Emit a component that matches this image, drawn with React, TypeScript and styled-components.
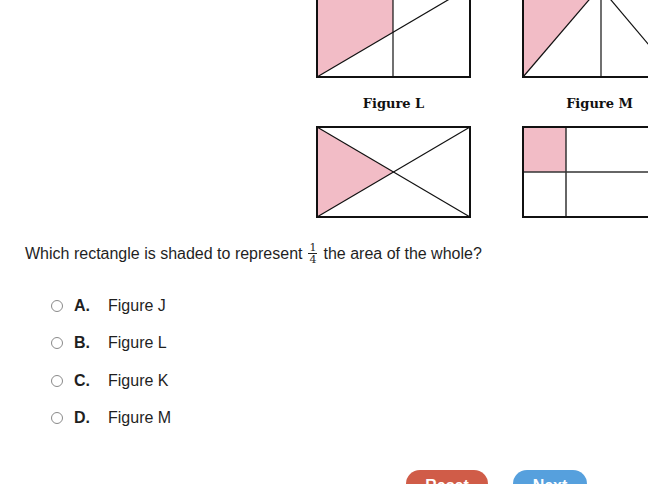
import React from "react";
import styled, { createGlobalStyle } from "styled-components";

const GlobalStyle = createGlobalStyle`
  html, body { margin: 0; padding: 0; background: #fff; overflow: hidden; }
  body { font-family: "Liberation Sans", Arial, sans-serif; color: #1f1f1f; }
`;

const Page = styled.div`
  margin-top: -46px;
  padding-left: 25px;
`;

const Figures = styled.div`
  display: grid;
  grid-template-columns: 155px 155px;
  column-gap: 51px;
  row-gap: 16px;
  margin-left: 291px;
`;

const FigureCell = styled.div`
  display: flex;
  flex-direction: column;
  align-items: center;
`;

const FigureLabel = styled.div`
  font-family: "DejaVu Serif", serif;
  font-weight: bold;
  font-size: 13px;
  line-height: 20px;
  height: 20px;
  margin-bottom: 12px;
  color: #111;
`;

const FigureSvg = styled.svg`
  display: block;
  overflow: visible;
`;

const Question = styled.p`
  margin: 25px 0 0;
  font-size: 16px;
  line-height: 20px;
  display: flex;
  align-items: center;
  gap: 5px;
`;

const Fraction = styled.span`
  display: inline-flex;
  flex-direction: column;
  align-items: center;
  font-family: "DejaVu Serif", serif;
  font-size: 11px;
  line-height: 9px;
  margin: 0 1px;
`;

const FracTop = styled.span`
  border-bottom: 1px solid #222;
  padding: 0 1px 1px;
`;

const FracBottom = styled.span`
  padding-top: 1px;
`;

const Options = styled.ul`
  list-style: none;
  margin: 32px 0 0;
  padding: 0 0 0 26px;
  display: flex;
  flex-direction: column;
  gap: 17.4px;
`;

const Option = styled.li`
  display: flex;
  align-items: center;
  height: 20px;
  font-size: 16px;
`;

const Radio = styled.span`
  width: 12px;
  height: 12px;
  border: 1px solid #8a8a8a;
  border-radius: 50%;
  box-sizing: border-box;
  margin-right: 11px;
`;

const Letter = styled.span`
  font-weight: bold;
  width: 34px;
`;

const Buttons = styled.div`
  display: flex;
  gap: 25px;
  margin-top: 42px;
  padding-left: 381px;
`;

const Button = styled.button<{ $color: string; $w: number }>`
  width: ${(p) => p.$w}px;
  height: 32px;
  border: none;
  border-radius: 14px;
  background: ${(p) => p.$color};
  color: #fff;
  font-family: "Liberation Sans", Arial, sans-serif;
  font-weight: bold;
  font-size: 16px;
`;

const W = 155;
const H = 92;

const Frame = () => <rect x={1} y={1} width={W - 2} height={H - 2} fill="none" stroke="#111" strokeWidth={2} />;

const FigJ = () => (
  <FigureSvg width={W} height={H} viewBox={`0 0 ${W} ${H}`}>
    <polygon points={`1,1 77,1 77,${H / 2} 1,${H - 1}`} fill="#f2bcc6" />
    <line x1={77} y1={1} x2={77} y2={H - 1} stroke="#111" strokeWidth={1.2} />
    <line x1={1} y1={H - 1} x2={W - 1} y2={1} stroke="#111" strokeWidth={1.2} />
    <Frame />
  </FigureSvg>
);

const FigK = () => (
  <FigureSvg width={W} height={H} viewBox={`0 0 ${W} ${H}`}>
    <polygon points={`1,1 78,1 1,${H - 1}`} fill="#f2bcc6" />
    <line x1={79} y1={1} x2={79} y2={H - 1} stroke="#111" strokeWidth={1.2} />
    <line x1={1} y1={H - 1} x2={78} y2={1} stroke="#111" strokeWidth={1.2} />
    <line x1={78} y1={1} x2={W - 1} y2={H - 1} stroke="#111" strokeWidth={1.2} />
    <Frame />
  </FigureSvg>
);

const FigL = () => (
  <FigureSvg width={W} height={H} viewBox={`0 0 ${W} ${H}`}>
    <polygon points={`1,1 ${W / 2},${H / 2} 1,${H - 1}`} fill="#f2bcc6" />
    <line x1={1} y1={1} x2={W - 1} y2={H - 1} stroke="#111" strokeWidth={1.2} />
    <line x1={1} y1={H - 1} x2={W - 1} y2={1} stroke="#111" strokeWidth={1.2} />
    <Frame />
  </FigureSvg>
);

const FigM = () => (
  <FigureSvg width={W} height={H} viewBox={`0 0 ${W} ${H}`}>
    <rect x={1} y={1} width={43} height={45} fill="#f2bcc6" />
    <line x1={44} y1={1} x2={44} y2={H - 1} stroke="#333" strokeWidth={1.5} />
    <line x1={1} y1={46} x2={W - 1} y2={46} stroke="#333" strokeWidth={1.5} />
    <Frame />
  </FigureSvg>
);

const figures = [
  { label: "Figure J", Fig: FigJ },
  { label: "Figure K", Fig: FigK },
  { label: "Figure L", Fig: FigL },
  { label: "Figure M", Fig: FigM },
];

const options = [
  { l: "A.", t: "Figure J" },
  { l: "B.", t: "Figure L" },
  { l: "C.", t: "Figure K" },
  { l: "D.", t: "Figure M" },
];

export default function App() {
  return (
    <>
      <GlobalStyle />
      <Page>
        <Figures>
          {figures.map(({ label, Fig }) => (
            <FigureCell key={label}>
              <FigureLabel>{label}</FigureLabel>
              <Fig />
            </FigureCell>
          ))}
        </Figures>
        <Question>
          Which rectangle is shaded to represent
          <Fraction>
            <FracTop>1</FracTop>
            <FracBottom>4</FracBottom>
          </Fraction>
          the area of the whole?
        </Question>
        <Options>
          {options.map((o) => (
            <Option key={o.l}>
              <Radio />
              <Letter>{o.l}</Letter>
              {o.t}
            </Option>
          ))}
        </Options>
        <Buttons>
          <Button $color="#d05c48" $w={82}>Reset</Button>
          <Button $color="#56a0dd" $w={74}>Next</Button>
        </Buttons>
      </Page>
    </>
  );
}
